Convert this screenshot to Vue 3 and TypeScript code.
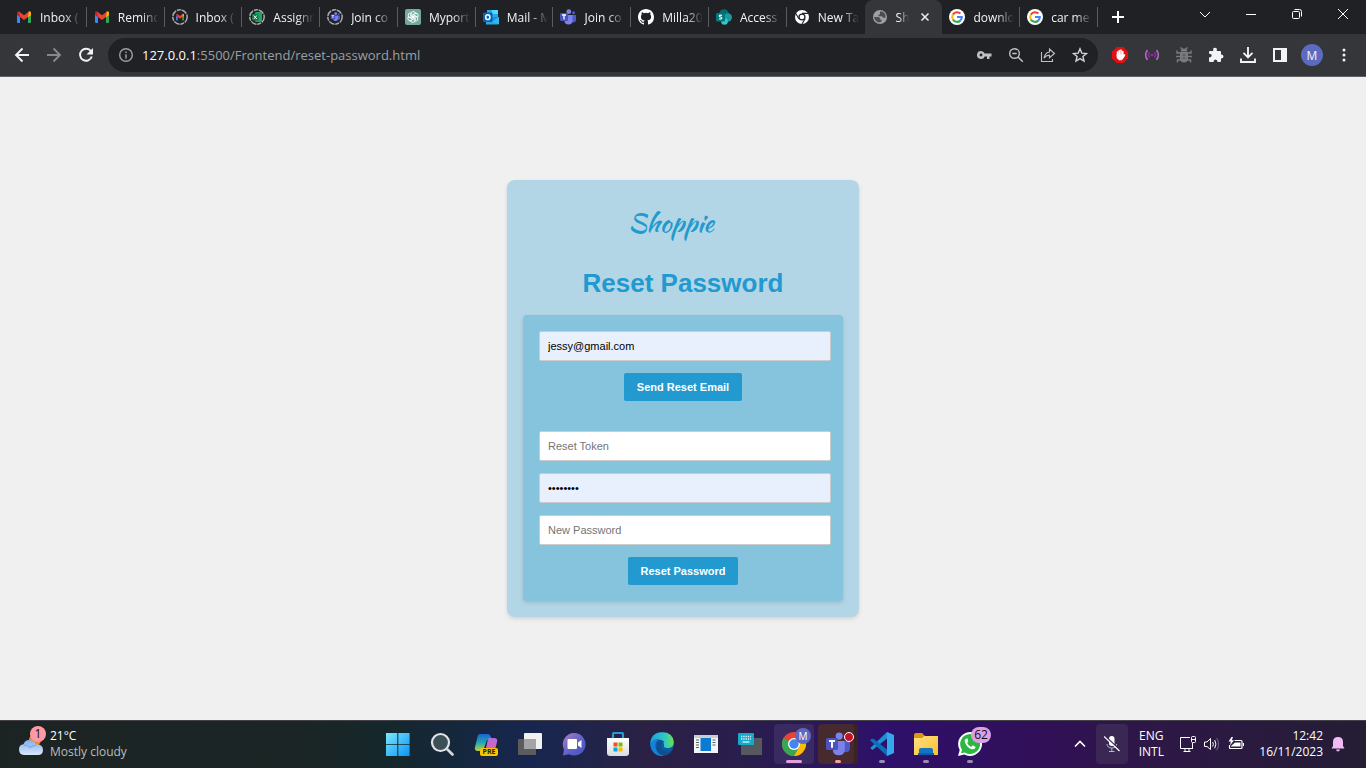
<script setup lang="ts">
import { ref } from 'vue'

interface Tab {
  icon: string
  title: string
  active?: boolean
}

interface TaskApp {
  icon: string
  label: string
  state?: 'open' | 'focused' | 'alert'
  badge?: string
  tag?: string
}

const tabs: Tab[] = [
  { icon: 'gmail', title: 'Inbox (' },
  { icon: 'gmail', title: 'Remind' },
  { icon: 'gmail-ring', title: 'Inbox (' },
  { icon: 'excel-ring', title: 'Assignn' },
  { icon: 'teams-ring', title: 'Join co' },
  { icon: 'gpt', title: 'Myport' },
  { icon: 'outlook', title: 'Mail - M' },
  { icon: 'teams', title: 'Join co' },
  { icon: 'github', title: 'Milla20' },
  { icon: 'sharepoint', title: 'Access' },
  { icon: 'chrome-mono', title: 'New Ta' },
  { icon: 'globe', title: 'Sh', active: true },
  { icon: 'google', title: 'downlo' },
  { icon: 'google', title: 'car me' },
]

const omniActions = [
  { icon: 'key', label: 'Manage passwords' },
  { icon: 'zoom-out', label: 'Zoom' },
  { icon: 'share', label: 'Share this page' },
  { icon: 'star', label: 'Bookmark this tab' },
]

const extensions = [
  { icon: 'adblock', label: 'Ad blocker' },
  { icon: 'signal', label: 'Live signal' },
  { icon: 'bug', label: 'Debugger' },
  { icon: 'puzzle', label: 'Extensions' },
  { icon: 'download', label: 'Downloads' },
  { icon: 'panel', label: 'Side panel' },
]

const windowControls = [
  { icon: 'chevron', label: 'Search tabs' },
  { icon: 'minimize', label: 'Minimize' },
  { icon: 'restore', label: 'Restore' },
  { icon: 'close', label: 'Close' },
]

const apps: TaskApp[] = [
  { icon: 'windows', label: 'Start' },
  { icon: 'search', label: 'Search' },
  { icon: 'copilot', label: 'Copilot', tag: 'PRE' },
  { icon: 'taskview', label: 'Task view' },
  { icon: 'chat', label: 'Chat' },
  { icon: 'store', label: 'Microsoft Store' },
  { icon: 'edge', label: 'Edge' },
  { icon: 'reader', label: 'Reader' },
  { icon: 'remote', label: 'Keyboard' },
  { icon: 'chrome', label: 'Chrome', state: 'focused' },
  { icon: 'teams-big', label: 'Teams', state: 'alert' },
  { icon: 'vscode', label: 'Visual Studio Code', state: 'open' },
  { icon: 'folder', label: 'File Explorer', state: 'open' },
  { icon: 'whatsapp', label: 'WhatsApp', state: 'open', badge: '62' },
]

const email = ref('jessy@gmail.com')
const token = ref('')
const currentPassword = ref('password')
const newPassword = ref('')
</script>

<template>
  <svg class="sprite" aria-hidden="true">
    <defs>
      <linearGradient id="winGrad" x1="0" y1="0" x2="1" y2="1"><stop offset="0" stop-color="#7be8fb" /><stop offset="1" stop-color="#0a93f5" /></linearGradient>
      <linearGradient id="edgeGrad" x1="0" y1="0" x2="1" y2="0"><stop offset="0" stop-color="#1ba0e0" /><stop offset=".6" stop-color="#2fc6c8" /><stop offset="1" stop-color="#6be04e" /></linearGradient>
      <linearGradient id="chatGrad" x1="0" y1="0" x2="1" y2="1"><stop offset="0" stop-color="#a77fc0" /><stop offset=".6" stop-color="#5b5fc7" /><stop offset="1" stop-color="#4653c6" /></linearGradient>
      <linearGradient id="copA" x1="0" y1="0" x2="0" y2="1"><stop offset="0" stop-color="#1c62d5" /><stop offset=".5" stop-color="#22a6b0" /><stop offset="1" stop-color="#b4d443" /></linearGradient>
      <linearGradient id="copB" x1="0" y1="0" x2="0" y2="1"><stop offset="0" stop-color="#b06ae8" /><stop offset="1" stop-color="#f3658a" /></linearGradient>
      <linearGradient id="cloudGrad" x1="0" y1="0" x2="0" y2="1"><stop offset="0" stop-color="#7fb0f0" /><stop offset="1" stop-color="#d9e6fa" /></linearGradient>
      <linearGradient id="folderGrad" x1="0" y1="0" x2="1" y2="1"><stop offset="0" stop-color="#ffe084" /><stop offset="1" stop-color="#fbbf2c" /></linearGradient>
      <linearGradient id="bagGrad" x1="0" y1="0" x2="0" y2="1"><stop offset="0" stop-color="#ffffff" /><stop offset="1" stop-color="#d8dbe0" /></linearGradient>
    </defs>

    <symbol id="i-gmail" viewBox="0 0 16 16">
      <path d="M1 4v9q0 1 1 1h2V7z" fill="#4285f4" /><path d="M15 4v9q0 1-1 1h-2V7z" fill="#34a853" />
      <path d="M1 4q0-2 2-1.6L4 3v5.2L1 6z" fill="#c5221f" /><path d="M15 4q0-2-2-1.6L12 3v5.2L15 6z" fill="#fbbc04" />
      <path d="M3 2.4 8 6.3l5-3.9L12 8 8 11 4 8z" fill="#ea4335" />
    </symbol>
    <symbol id="i-ring" viewBox="0 0 16 16"><circle cx="8" cy="8" r="7.2" fill="none" stroke="#a9acb0" stroke-width="1.5" stroke-dasharray="6 1 4 .8" /></symbol>
    <symbol id="i-gmail-ring" viewBox="0 0 16 16"><use href="#i-ring" width="16" height="16" /><use href="#i-gmail" x="3.5" y="3.5" width="9" height="9" /></symbol>
    <symbol id="i-excel-ring" viewBox="0 0 16 16">
      <use href="#i-ring" width="16" height="16" /><rect x="6" y="3" width="7" height="10" rx="1" fill="#21a366" /><rect x="3" y="5" width="6.5" height="6.5" rx="1" fill="#107c41" /><path d="m4.8 6.5 3 3.5m0-3.5-3 3.5" stroke="#fff" />
    </symbol>
    <symbol id="i-teams" viewBox="0 0 16 16">
      <circle cx="8.8" cy="2.7" r="2.4" fill="#7b83eb" /><circle cx="13.6" cy="3.7" r="1.5" fill="#5059c9" />
      <path d="M11 6h5v4.500q0 3-3 3-2 0-2-3z" fill="#5059c9" /><path d="M5.500 6h7v5.500q0 4-4 4t-4-4z" fill="#7b83eb" />
      <rect y="4" width="8" height="8" rx="1" fill="#4b53bc" /><path d="M2 6h4M4 6v4.500" stroke="#fff" stroke-width="1.3" />
    </symbol>
    <symbol id="i-teams-ring" viewBox="0 0 16 16"><use href="#i-ring" width="16" height="16" /><use href="#i-teams" x="3.5" y="3" width="9.5" height="9.5" /></symbol>
    <symbol id="i-gpt" viewBox="0 0 16 16">
      <rect width="16" height="16" rx="2" fill="#74aa9c" />
      <g fill="none" stroke="#fff" stroke-width=".9">
        <path id="gptp" d="M6 8V4.800a2.300 2.300 0 0 1 4.500-.6L8 5.700v3.500" /><use href="#gptp" transform="rotate(60 8 8)" /><use href="#gptp" transform="rotate(120 8 8)" /><use href="#gptp" transform="rotate(180 8 8)" /><use href="#gptp" transform="rotate(240 8 8)" /><use href="#gptp" transform="rotate(300 8 8)" />
      </g>
    </symbol>
    <symbol id="i-outlook" viewBox="0 0 16 16">
      <rect x="4" y="1" width="11" height="8" fill="#28a8ea" /><rect x="9" y="1" width="6" height="4" fill="#50d9ff" /><path d="M3 8h13v7H4z" fill="#1490df" /><path d="m16 8-8 5 8 2.500z" fill="#32b9f1" /><path d="M3 9v6.500h12z" fill="#28a8ea" />
      <rect y="3.500" width="9.500" height="9.500" rx="1" fill="#0364b8" /><ellipse cx="4.800" cy="8.200" rx="2.100" ry="2.400" fill="none" stroke="#fff" stroke-width="1.500" />
    </symbol>
    <symbol id="i-github" viewBox="0 0 16 16"><path fill="#fff" d="M8 0C3.580 0 0 3.580 0 8c0 3.540 2.290 6.530 5.470 7.590.4.070.55-.17.55-.38 0-.19-.01-.82-.01-1.490-2.010.37-2.530-.49-2.690-.94-.09-.23-.48-.94-.82-1.130-.28-.15-.68-.52-.01-.53.63-.01 1.080.58 1.230.82.72 1.210 1.870.87 2.330.66.07-.52.28-.87.51-1.070-1.780-.2-3.640-.89-3.640-3.950 0-.87.31-1.590.82-2.150-.08-.2-.36-1.020.08-2.120 0 0 .67-.21 2.200.82a7.500 7.500 0 0 1 4 0c1.530-1.040 2.200-.82 2.200-.82.44 1.100.16 1.920.08 2.120.51.56.82 1.270.82 2.150 0 3.070-1.870 3.750-3.650 3.950.29.25.54.73.54 1.480 0 1.070-.01 1.930-.01 2.200 0 .21.15.46.55.38A8 8 0 0 0 16 8c0-4.420-3.580-8-8-8" /></symbol>
    <symbol id="i-sharepoint" viewBox="0 0 16 16">
      <circle cx="8" cy="5" r="4.800" fill="#036c70" /><circle cx="11.800" cy="8.500" r="4.200" fill="#1a9ba1" /><circle cx="8.500" cy="12.500" r="3.300" fill="#37c6d0" /><rect y="4" width="9" height="8.500" rx="1" fill="#03787c" />
      <path d="M6 6.500q-2.700-1-2.700.5 0 .7 1.300 1t1.200 1.200q-.3 1.400-2.800.5" fill="none" stroke="#fff" stroke-width="1.200" />
    </symbol>
    <symbol id="i-chrome-mono" viewBox="0 0 16 16">
      <circle cx="8" cy="8" r="7" fill="#fff" /><circle cx="8" cy="8" r="3.600" fill="#202124" /><circle cx="8" cy="8" r="2.300" fill="#fff" />
      <path d="M8 4.400h6.500M4.900 9.800 1.800 4.400M11.100 9.800 8 15" stroke="#202124" stroke-width="1.100" />
    </symbol>
    <symbol id="i-globe" viewBox="0 0 16 16">
      <circle cx="8" cy="8" r="7" fill="#9aa0a6" /><path d="M2 8h4q2 0 2 1.500t1.500 1.300v1.500L8 13.500Q3 13 2 8M8 2.500v2.300q0 1-1.500 1.200v1.300h3q1.500 0 1.500 1.500h2.500Q14 4 10 2.500z" fill="#4b4d52" />
    </symbol>
    <symbol id="i-google" viewBox="0 0 16 16">
      <circle cx="8" cy="8" r="8" fill="#fff" />
      <g fill="none" stroke-width="2.100"><path d="M3.900 5.600A4.800 4.800 0 0 1 11.400 4.600" stroke="#ea4335" /><path d="M3.900 5.600a4.800 4.800 0 0 0 0 4.800" stroke="#fbbc05" /><path d="M3.900 10.400a4.800 4.800 0 0 0 7.400 1.200" stroke="#34a853" /><path d="M8 8h4.800q0 2.300-1.500 3.600" stroke="#4285f4" /></g>
    </symbol>

    <symbol id="i-chevron" viewBox="0 0 16 16"><path d="m3 6 5 5 5-5" fill="none" stroke="#fff" /></symbol>
    <symbol id="i-minimize" viewBox="0 0 16 16"><path d="M3 8.500h10" fill="none" stroke="#fff" /></symbol>
    <symbol id="i-restore" viewBox="0 0 16 16"><rect x="3.500" y="5.500" width="7" height="7" rx="1" fill="none" stroke="#fff" /><path d="M5.500 3.500h5q2 0 2 2v5" fill="none" stroke="#fff" /></symbol>
    <symbol id="i-close" viewBox="0 0 16 16"><path d="m3 3 10 10M13 3 3 13" fill="none" stroke="#fff" /></symbol>
    <symbol id="i-tabclose" viewBox="0 0 16 16"><path d="m4.500 4.500 7 7m0-7-7 7" stroke="#e8eaed" stroke-width="1.600" /></symbol>
    <symbol id="i-plus" viewBox="0 0 16 16"><path d="M8 2v12M2 8h12" stroke="#fff" stroke-width="2" /></symbol>
    <symbol id="i-back" viewBox="0 0 16 16"><path d="M15 8H2m6.500-6.500L2 8l6.500 6.500" fill="none" stroke="currentColor" stroke-width="1.900" /></symbol>
    <symbol id="i-forward" viewBox="0 0 16 16"><path d="M1 8h13M7.500 1.500 14 8l-6.500 6.500" fill="none" stroke="currentColor" stroke-width="1.900" /></symbol>
    <symbol id="i-reload" viewBox="0 0 16 16"><path d="M13 4.300A6 6 0 1 0 13.800 9.500" fill="none" stroke="currentColor" stroke-width="1.900" /><path d="M15 1v6.500H8.500z" fill="currentColor" /></symbol>
    <symbol id="i-info" viewBox="0 0 16 16"><circle cx="8" cy="8" r="6.300" fill="none" stroke="#9aa0a6" stroke-width="1.400" /><path d="M8 7.200V11.500M8 4.500V6" stroke="#9aa0a6" stroke-width="1.500" /></symbol>
    <symbol id="i-key" viewBox="0 0 16 16"><path d="M5 4a4 4 0 1 0 3.700 5.500H11v2.500h2.500V9.500H15.500v-3H8.700A4 4 0 0 0 5 4m0 2.600a1.400 1.400 0 1 1 0 2.800 1.400 1.400 0 0 1 0-2.800" fill="#bdc1c6" fill-rule="evenodd" /></symbol>
    <symbol id="i-zoom-out" viewBox="0 0 16 16"><circle cx="6.500" cy="6.500" r="4.800" fill="none" stroke="#bdc1c6" stroke-width="1.400" /><path d="m10 10 4.800 4.800M4.300 6.500h4.400" stroke="#bdc1c6" stroke-width="1.500" /></symbol>
    <symbol id="i-share" viewBox="0 0 16 16"><path d="M1.500 5v9.500h11V12M9.500 5V2l5 4.500-5 4.200V8.200Q6 8 4 11.200 5 5.500 9.500 5z" fill="none" stroke="#bdc1c6" stroke-width="1.100" /></symbol>
    <symbol id="i-star" viewBox="0 0 16 16"><path d="m8 1.800 1.800 4.300 4.700.4-3.600 3 1.100 4.600-4-2.500-4 2.500 1.100-4.600-3.600-3 4.700-.4z" fill="none" stroke="#d0d3d7" stroke-width="1.400" /></symbol>
    <symbol id="i-adblock" viewBox="0 0 16 16"><path d="M4.700 0h6.600L16 4.700v6.600L11.300 16H4.700L0 11.300V4.700z" fill="#e30f12" /><path d="M5.500 9V5M7.200 8V3.500M9 8V3M10.800 9V4.500M11.200 10.500l1.300-2.500" stroke="#fff" stroke-width="1.600" stroke-linecap="round" /><path d="M4.700 7.500h6.900v3L10 13.300H7L4.700 11z" fill="#fff" /></symbol>
    <symbol id="i-signal" viewBox="0 0 16 16"><g fill="none" stroke-width="1.500"><path d="M3.500 3Q-.2 8 3.500 13M12.500 3q3.700 5 0 10" stroke="#b16fc0" /><path d="M5.500 5.200q-2 2.800 0 5.600M10.500 5.200q2 2.800 0 5.600" stroke="#8e24aa" /></g><circle cx="8" cy="8" r="1.300" fill="#a020b8" /></symbol>
    <symbol id="i-bug" viewBox="0 0 16 16"><path d="M4 5h8v7Q11.500 15.500 8 15.500T4 12zM4.500 4.500Q5 1.500 8 1.500t3.500 3z" fill="#797a7d" /><path d="m4.500.5 2 2M11.500.5l-2 2M1 3.500V6h4M15 3.500V6h-4M0 9.500h5m6 0h5M1.500 15.500V13H5m9.500 2.500V13H11" fill="none" stroke="#797a7d" stroke-width="1.500" /><path d="M6.500 8h3m-3 3h3" stroke="#4a4b4f" /></symbol>
    <symbol id="i-puzzle" viewBox="0 0 16 16"><path d="M2 4h3.300q-.8-3.200 1.700-3.200T8.700 4H12q1 0 1 1v2.500q2.500 0 2.500 2T13 11.500V14q0 1-1 1H9.500q0-2.600-2-2.600T5.500 15H2q-1 0-1-1v-3.500q2.700 0 2.700-2T1 6.800V5q0-1 1-1" fill="#f1f3f4" /></symbol>
    <symbol id="i-download" viewBox="0 0 16 16"><path d="M8 0v10M3.500 5.800 8 10.300l4.500-4.500M1 11.500V15h14v-3.500" fill="none" stroke="#f1f3f4" stroke-width="1.900" /></symbol>
    <symbol id="i-panel" viewBox="0 0 16 16"><path d="M1 1h14v14H1zm2 2v10h6V3z" fill="#f1f3f4" fill-rule="evenodd" /></symbol>
    <symbol id="i-kebab" viewBox="0 0 16 16"><g fill="#f1f3f4"><circle cx="8" cy="3" r="1.500" /><circle cx="8" cy="8" r="1.500" /><circle cx="8" cy="13" r="1.500" /></g></symbol>

    <symbol id="i-windows" viewBox="0 0 24 24"><path d="M0 1h11.300v11.300H0zM12.300 1H23.600v11.300H12.300zM0 13h11.300v11H0zM12.300 13H23.600v11H12.300z" fill="url(#winGrad)" /></symbol>
    <symbol id="i-search" viewBox="0 0 24 24"><circle cx="10.500" cy="10.500" r="8.500" fill="#3c5058" stroke="#e1e4e6" stroke-width="2.200" /><path d="m17 17 5.500 5.500" stroke="#d5d8da" stroke-width="2.600" stroke-linecap="round" /></symbol>
    <symbol id="i-copilot" viewBox="0 0 24 24">
      <path d="M6 2h8q2 0 3 3l1 3h-5L9 19H4q-4 0-3-4L3.500 5Q4 2 6 2" fill="url(#copA)" /><path d="M15.500 6H20q4 0 3 4l-2 8q-1 4-4 4H9q2-1 2.500-4l2-9q.5-3 2-3" fill="url(#copB)" />
    </symbol>
    <symbol id="i-taskview" viewBox="0 0 24 24"><rect x="6" y="1" width="18" height="16" rx="1" fill="#f1f1f2" /><rect y="7" width="18" height="16" rx="1" fill="#5c5c5f" /><path d="M6 7h12v10H6z" fill="#a4a4a6" /></symbol>
    <symbol id="i-chat" viewBox="0 0 24 24"><path d="M12 1a11.300 11.300 0 1 1-5 21.300L1 23.500l1-6A11.300 11.300 0 0 1 12 1" fill="url(#chatGrad)" /><rect x="5.500" y="7" width="9.500" height="10" rx="1" fill="#fff" /><path d="m16 10.500 3.500-2.500v8L16 13.500z" fill="#fff" /></symbol>
    <symbol id="i-store" viewBox="0 0 24 24"><path d="M7 7V2q0-1 1-1h8q1 0 1 1v5" fill="none" stroke="#2a9ad6" stroke-width="2.200" /><path d="M1 6h22v15q0 3-3 3H4q-3 0-3-3z" fill="url(#bagGrad)" /><path d="M7.500 10.500h4v4h-4z" fill="#f25022" /><path d="M12.500 10.500h4v4h-4z" fill="#7fba00" /><path d="M7.500 15.500h4v4h-4z" fill="#00a4ef" /><path d="M12.500 15.500h4v4h-4z" fill="#ffb900" /></symbol>
    <symbol id="i-edge" viewBox="0 0 24 24"><circle cx="12" cy="12" r="11.800" fill="#0c59a4" /><path d="M.2 12Q1 .2 12 .2q11 0 11.800 9.800 0 6-6.300 6-4.500 0-3.500-3Q14 8 9 7.500 3 7.500.2 12" fill="url(#edgeGrad)" /><path d="M.2 12Q3 6.500 9 7q-5 4-3 10t8 6.800Q2 25 .2 12" fill="#1681d8" /><path d="M14 9.500q-5 3-2 8 4 4 10.500.5-3 5-8.500 5.500Q6 22 6.500 14 8 8.500 11.500 8.500q2 0 2.500 1" fill="#104f8f" /></symbol>
    <symbol id="i-reader" viewBox="0 0 24 24"><path d="M0 3h24v18H0z" fill="#f3f4f6" /><path d="M0 3h24v3H0z" fill="#c8cdd4" /><path d="M6.500 6H17v13H6.500z" fill="#0c7ad0" /><path d="M2 8h3m-3 2.500h3M2 13h3m-3 2.500h3M18.500 8h3m-3 2.500h3M18.500 13h3" stroke="#596068" /></symbol>
    <symbol id="i-remote" viewBox="0 0 24 24"><path d="M3 6h21v17H3z" fill="#55585e" /><rect y="1" width="16" height="12" rx="1" fill="#16a9c9" /><path d="M3 4.500h10M3 7h10" stroke="#d9f8ff" stroke-width="1.300" stroke-dasharray="1.300 1" /><path d="M4.500 10h7" stroke="#d9f8ff" stroke-width="1.300" /></symbol>
    <symbol id="i-chrome" viewBox="0 0 24 24"><circle cx="12" cy="12" r="12" fill="#ea4335" /><path d="M1.600 6A12 12 0 0 0 12 24l5.200-9L12 12z" fill="#34a853" /><path d="M22.400 6A12 12 0 0 1 12 24l5.200-9L12 6z" fill="#fbbc04" /><circle cx="12" cy="12" r="6" fill="#fff" /><circle cx="12" cy="12" r="4.700" fill="#4285f4" /></symbol>
    <symbol id="i-teams-big" viewBox="0 0 24 24"><use href="#i-teams" width="24" height="24" /></symbol>
    <symbol id="i-vscode" viewBox="0 0 24 24"><path d="M.3 16 17 0v6.500L2.500 18z" fill="#218fd8" /><path d="M17 17.500V24L0 8.200l2-1.700 2.500 1z" fill="#0c70b8" /><path d="m17 0 7 3v18l-7 3z" fill="#35a9ee" /></symbol>
    <symbol id="i-folder" viewBox="0 0 24 24"><path d="M0 3q0-2 2-2h6l3 3h11v9H0z" fill="#d99a0e" /><path d="M0 6h8l2.500-2H24v19H0z" fill="url(#folderGrad)" /><path d="M5 22v-4q0-2 2-2h10q2 0 2 2v4z" fill="#1474c4" /><path d="M4 21h16v2H4z" fill="#0f5fa8" /></symbol>
    <symbol id="i-whatsapp" viewBox="0 0 24 24"><path d="M12 0a12 12 0 1 1-5.800 22.500L0 24l1.700-6A12 12 0 0 1 12 0" fill="#fff" /><path d="M12 2a10 10 0 1 1-5.300 18.400L3 21.300l1-3.600A10 10 0 0 1 12 2" fill="#2bb741" /><path d="M8.500 6.500q-2.500 1-1.500 4 2 5 6.500 6.700 3.500.8 4.200-2.200l-3-1.700-1.500 1.700q-3-1.200-4-4L10.300 9.500 9.500 6.500z" fill="#fff" /></symbol>

    <symbol id="i-mic" viewBox="0 0 16 16"><rect x="5" y="0" width="5.500" height="10" rx="2.700" fill="#fff" /><path d="M3 8q.3 4 4.800 4t4.800-4M7.800 12v3.500M5 15.500h5.500" stroke="#bdb6c8" fill="none" /><path d="m1 0 15 14" stroke="#3a2754" stroke-width="1.500" /><path d="m0 .5 15.500 14.500" stroke="#fff" stroke-width="1.200" /></symbol>
    <symbol id="i-network" viewBox="0 0 16 16"><path d="M10 1.500H.5v11h12V8M3.500 15.500h7M5 12.500v3m4-3v3M12.500 7v6" fill="none" stroke="#fff" /><rect x="11.500" y=".5" width="4" height="6" rx="1" fill="none" stroke="#fff" /><path d="M11.500 3.500h4" stroke="#fff" /></symbol>
    <symbol id="i-sound" viewBox="0 0 16 16"><path d="M.5 6v4.500H3L6.500 13.500V2.500L3 6zM8.700 6q1.300 2.200 0 4.500M10.700 4q2.500 4 0 8.300" fill="none" stroke="#fff" /><path d="M12.700 2q3.700 6 0 12.300" fill="none" stroke="#756786" /></symbol>
    <symbol id="i-battery" viewBox="0 0 16 16"><path d="M6.500 4.500H13q1 0 1 1v6q0 1-1 1H2.500q-1 0-1-1V9" fill="none" stroke="#fff" stroke-width="1.200" /><path d="M7 6.500h5.500v4H3V10z" fill="#fff" /><path d="M15.500 7v3" stroke="#fff" /><path d="M3.500 1 .5 5.500h2.300L2 9.500l4-5.300H3.800L5 1z" fill="#fff" /></symbol>
    <symbol id="i-bell" viewBox="0 0 16 16"><path d="M8 1q5 0 5 5v4l1.500 2.500h-13L3 10V6q0-5 5-5M6 13.500h4Q9.500 15.500 8 15.500T6 13.500" fill="#f0bdf3" /></symbol>
    <symbol id="i-up" viewBox="0 0 16 16"><path d="m3 10.500 5-5 5 5" fill="none" stroke="#fff" stroke-width="1.600" /></symbol>
    <symbol id="i-weather" viewBox="0 0 28 26"><circle cx="17" cy="9" r="6" fill="#f48a22" /><path d="M7 24q-6 0-6-5.500 0-5 4.500-5.300Q7 8.500 12 9q4.500.5 6 4.500 7-.5 7 5.500 0 5-5 5z" fill="url(#cloudGrad)" /><path d="M6 14.500q4-1 6 2 3-2.500 6-2" fill="none" stroke="#87ace6" stroke-width="1.500" /></symbol>
  </svg>

  <div class="desktop">
    <header class="browser">
      <div class="tabstrip">
        <nav class="tabs" aria-label="Open tabs">
          <div v-for="(tab, i) in tabs" :key="i" class="tab" :class="{ active: tab.active, before: tabs[i + 1]?.active }">
            <button type="button" class="tab-main">
              <svg class="i16"><use :href="`#i-${tab.icon}`" /></svg>
              <span class="tab-title">{{ tab.title }}</span>
            </button>
            <button v-if="tab.active" type="button" class="tab-close" aria-label="Close tab">
              <svg class="i16"><use href="#i-tabclose" /></svg>
            </button>
          </div>
        </nav>
        <button type="button" class="new-tab" aria-label="New tab"><svg class="i16"><use href="#i-plus" /></svg></button>
        <div class="window-controls">
          <button v-for="c in windowControls" :key="c.icon" type="button" :aria-label="c.label"><svg class="i16"><use :href="`#i-${c.icon}`" /></svg></button>
        </div>
      </div>

      <div class="toolbar">
        <div class="group">
          <button type="button" aria-label="Back"><svg class="i16"><use href="#i-back" /></svg></button>
          <button type="button" class="dim" aria-label="Forward"><svg class="i16"><use href="#i-forward" /></svg></button>
          <button type="button" aria-label="Reload"><svg class="i16"><use href="#i-reload" /></svg></button>
        </div>
        <div class="omnibox">
          <svg class="i16"><use href="#i-info" /></svg>
          <p class="url"><span class="host">127.0.0.1</span>:5500/Frontend/reset-password.html</p>
          <div class="group">
            <button v-for="a in omniActions" :key="a.icon" type="button" :aria-label="a.label"><svg class="i16"><use :href="`#i-${a.icon}`" /></svg></button>
          </div>
        </div>
        <div class="group">
          <button v-for="e in extensions" :key="e.icon" type="button" :aria-label="e.label"><svg class="i16"><use :href="`#i-${e.icon}`" /></svg></button>
          <button type="button" aria-label="Profile"><span class="avatar">M</span></button>
          <button type="button" aria-label="Menu"><svg class="i16"><use href="#i-kebab" /></svg></button>
        </div>
      </div>
    </header>

    <main class="page">
      <section class="card">
        <div class="logo">Shoppie</div>
        <h1>Reset Password</h1>
        <div class="panel">
          <form @submit.prevent>
            <input v-model="email" class="filled" type="email" aria-label="Email" placeholder="Email" />
            <button type="submit">Send Reset Email</button>
          </form>
          <form @submit.prevent>
            <input v-model="token" type="text" aria-label="Reset Token" placeholder="Reset Token" />
            <input v-model="currentPassword" class="filled" type="password" aria-label="Password" autocomplete="off" />
            <input v-model="newPassword" type="password" aria-label="New Password" placeholder="New Password" autocomplete="off" />
            <button type="submit">Reset Password</button>
          </form>
        </div>
      </section>
    </main>

    <footer class="taskbar">
      <button type="button" class="weather">
        <span class="weather-icon"><svg><use href="#i-weather" /></svg><span class="weather-badge">1</span></span>
        <span class="weather-text"><span>21°C</span><span class="muted">Mostly cloudy</span></span>
      </button>
      <nav class="apps" aria-label="Taskbar">
        <button v-for="app in apps" :key="app.icon" type="button" class="app" :class="app.state" :aria-label="app.label">
          <svg class="i24"><use :href="`#i-${app.icon}`" /></svg>
          <span v-if="app.badge" class="count">{{ app.badge }}</span>
          <span v-if="app.tag" class="tag">{{ app.tag }}</span>
          <span v-if="app.state === 'focused'" class="profile">M</span>
          <span v-if="app.state === 'alert'" class="dot"></span>
        </button>
      </nav>
      <div class="tray">
        <button type="button" class="tray-up" aria-label="Show hidden icons"><svg class="i16"><use href="#i-up" /></svg></button>
        <button type="button" class="mic" aria-label="Microphone muted"><svg class="i16"><use href="#i-mic" /></svg></button>
        <button type="button" class="lang"><span>ENG</span><span>INTL</span></button>
        <button type="button" class="status" aria-label="Network, sound and battery">
          <svg class="i16"><use href="#i-network" /></svg>
          <svg class="i16"><use href="#i-sound" /></svg>
          <svg class="i16"><use href="#i-battery" /></svg>
        </button>
        <button type="button" class="clock"><span>12:42</span><span>16/11/2023</span></button>
        <button type="button" class="bell" aria-label="Notifications"><svg class="i16"><use href="#i-bell" /></svg></button>
      </div>
    </footer>
  </div>
</template>

<style>
body {
  margin: 0;
}
</style>

<style scoped>
.sprite {
  position: absolute;
  width: 0;
  height: 0;
}

.desktop {
  display: flex;
  flex-direction: column;
  height: 100vh;
  overflow: hidden;
  font-family: 'Open Sans', 'Noto Sans', sans-serif;
  font-size: 12px;
}

button {
  margin: 0;
  padding: 0;
  border: 0;
  background: none;
  color: inherit;
  font: inherit;
}

svg {
  display: block;
  flex: none;
}

.i16 {
  width: 16px;
  height: 16px;
}

.i24 {
  width: 24px;
  height: 24px;
}

.browser {
  flex: none;
  border-bottom: 1px solid #5f6064;
  background: #35363a;
  color: #f1f3f4;
}

.tabstrip {
  display: flex;
  height: 34px;
  padding-left: 9px;
  background: #202124;
}

.tabs {
  display: flex;
  flex: 0 1 1089px;
  min-width: 0;
}

.tab {
  display: flex;
  flex: 1;
  align-items: center;
  min-width: 0;
  box-sizing: border-box;
  padding: 0 3px 0 7px;
  background: linear-gradient(#5b5c60, #5b5c60) right center / 1px 20px no-repeat;
}

.tab.before {
  background: none;
}

.tab.active {
  border-radius: 8px 8px 0 0;
  background: #35363a;
}

.tab-main {
  display: flex;
  flex: 1;
  align-items: center;
  gap: 8px;
  min-width: 0;
}

.tab-title {
  flex: 1;
  text-align: left;
  white-space: nowrap;
  mask-image: linear-gradient(to left, transparent 3px, #000 20px);
}

.tab.active .tab-title {
  mask-image: linear-gradient(to left, transparent 2px, #000 12px);
}

.tab-close {
  padding: 0 6px;
}

.new-tab {
  display: grid;
  width: 40px;
  place-items: center;
}

.window-controls {
  display: flex;
  height: 28px;
  margin-left: auto;
}

.window-controls button {
  display: grid;
  width: 46px;
  place-items: center;
}

.toolbar {
  display: flex;
  align-items: center;
  gap: 6px;
  height: 42px;
  padding: 0 6px;
}

.group {
  display: flex;
}

.group button {
  display: grid;
  width: 32px;
  height: 32px;
  place-items: center;
}

.dim {
  color: #86888b;
}

.omnibox {
  display: flex;
  flex: 1;
  align-items: center;
  gap: 8px;
  height: 34px;
  padding: 0 2px 0 10px;
  border-radius: 17px;
  background: #202124;
}

.url {
  flex: 1;
  margin: 0;
  color: #9aa0a6;
  font-size: 13px;
}

.host {
  color: #fff;
}

.avatar {
  display: grid;
  width: 22px;
  height: 22px;
  border-radius: 50%;
  background: #5c6bc0;
  place-items: center;
}

.page {
  display: flex;
  flex: 1;
  align-items: center;
  justify-content: center;
  min-height: 0;
  background: #f0f0f0;
  font-family: 'Liberation Sans', Arial, sans-serif;
}

.card {
  width: 320px;
  padding: 16px;
  border-radius: 8px;
  background: #b2d6e5;
  box-shadow: 0 2px 4px rgba(0, 0, 0, 0.12);
  text-align: center;
}

.logo {
  height: 56px;
  padding-right: 24px;
  color: #2299cf;
  font-family: 'Kaushan Script', cursive;
  font-size: 26px;
  line-height: 54px;
}

h1 {
  margin: 16px 0;
  color: #2299cf;
  font-size: 26px;
  line-height: 31px;
}

.panel {
  display: flex;
  flex-direction: column;
  gap: 30px;
  padding: 16px 12px 16px 16px;
  border-radius: 4px;
  background: #86c3dd;
  box-shadow: 0 2px 4px rgba(0, 0, 0, 0.12);
}

form {
  display: grid;
  gap: 12px;
}

input {
  box-sizing: border-box;
  width: 100%;
  height: 30px;
  margin: 0;
  padding: 0 8px;
  border: 1px solid #ccc;
  border-radius: 2px;
  background: #fff;
  color: #000;
  font: 11px 'Liberation Sans', Arial, sans-serif;
}

input::placeholder {
  color: #757575;
}

input.filled {
  background: #e8f0fe;
}

form button {
  justify-self: center;
  height: 28px;
  margin-right: 4px;
  padding: 0 13px;
  border-radius: 2px;
  background: #2299cf;
  color: #fff;
  font: 700 11px 'Liberation Sans', Arial, sans-serif;
}

.taskbar {
  display: grid;
  flex: none;
  grid-template-columns: 1fr auto 1fr;
  box-sizing: border-box;
  height: 48px;
  padding-bottom: 1px;
  border-top: 1px solid #444248;
  background: linear-gradient(90deg, #1c2423 0%, #1b2525 22%, #14282d 29%, #172650 39%, #2a2145 47%, #291d4d 55%, #2e106b 65%, #310f58 76%, #2e1747 84%, #281b3c 94%, #241d34 100%);
  color: #fff;
}

.weather {
  display: flex;
  align-items: center;
  justify-self: start;
  gap: 4px;
  padding-left: 18px;
}

.weather-icon {
  position: relative;
}

.weather-icon svg {
  width: 28px;
  height: 26px;
}

.weather-badge {
  position: absolute;
  top: -5px;
  right: 0;
  width: 16px;
  height: 16px;
  border-radius: 50%;
  background: #ff99a4;
  color: #111;
  line-height: 16px;
}

.weather-text,
.lang,
.clock {
  display: flex;
  flex-direction: column;
  line-height: 16px;
}

.weather-text {
  text-align: left;
}

.muted {
  color: #b9bdbd;
}

.apps {
  display: flex;
  align-items: center;
  gap: 4px;
  padding-left: 2px;
}

.app {
  display: grid;
  position: relative;
  width: 40px;
  height: 40px;
  border-radius: 4px;
  place-items: center;
}

.focused {
  background: #3b2a60;
}

.alert {
  background: #472a2e;
  box-shadow: inset -4px 0 #3b2224;
}

.open::after,
.focused::after,
.alert::after {
  position: absolute;
  bottom: 1px;
  left: 17px;
  width: 6px;
  height: 3px;
  border-radius: 2px;
  background: #9a8bb0;
  content: '';
}

.focused::after {
  left: 12px;
  width: 16px;
  background: #dfa0dd;
}

.alert::after {
  background: #ff99a4;
}

.count,
.tag,
.profile,
.dot {
  position: absolute;
  border-radius: 8px;
}

.count {
  top: 3px;
  right: -1px;
  width: 20px;
  height: 16px;
  background: #dba0e6;
  color: #111;
  line-height: 16px;
}

.tag {
  right: 8px;
  bottom: 8px;
  width: 18px;
  height: 8px;
  border-radius: 2px;
  background: #fcc400;
  color: #222;
  font-size: 7px;
  font-weight: 700;
  line-height: 8px;
}

.profile {
  top: 4px;
  right: 3px;
  width: 16px;
  height: 16px;
  background: #5c6bc0;
  font-size: 10px;
  line-height: 16px;
}

.dot {
  top: 8px;
  right: 4px;
  width: 8px;
  height: 8px;
  border: 1px solid #fff;
  background: #c50f2f;
}

.tray {
  display: flex;
  align-items: center;
  justify-self: end;
  padding-right: 20px;
}

.tray-up {
  padding: 0 8px;
}

.mic {
  display: grid;
  width: 32px;
  height: 40px;
  border-radius: 4px;
  background: #3a2754;
  place-items: center;
}

.lang {
  width: 46px;
  align-items: center;
}

.status {
  display: flex;
  gap: 8px;
  padding: 0 15px 0 6px;
}

.clock {
  align-items: flex-end;
}

.bell {
  padding-left: 7px;
}
</style>
